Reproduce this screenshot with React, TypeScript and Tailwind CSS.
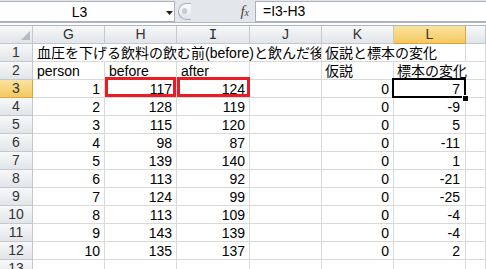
import React from "react";

const FONT = "font-['Liberation_Sans','Noto_Sans_CJK_JP',sans-serif]";

const persons = [1, 2, 3, 4, 5, 6, 7, 8, 9, 10];
const before = [117, 128, 115, 98, 139, 113, 124, 113, 143, 135];
const after = [124, 119, 120, 87, 140, 92, 99, 109, 139, 137];
const diff = [7, -9, 5, -11, 1, -21, -25, -4, -4, 2];

const cell =
  "h-[18px] shrink-0 border-r border-b border-[#d9d9d9] overflow-hidden whitespace-nowrap text-[14px] leading-[17px] pt-[1px] text-black";
const hdr =
  "h-[18px] shrink-0 border-r border-b border-[#c3c8ce] bg-linear-to-b from-[#f7f8f9] to-[#e2e5e9] text-center text-[14px] leading-[17px] text-[#333]";
const hdrSel =
  "h-[18px] shrink-0 border-r border-b border-[#e2a33c] bg-linear-to-b from-[#fbe3a0] to-[#f4c95c] text-center text-[14px] leading-[17px] text-[#333]";

function RowHeader({ n, sel }: { n: number; sel?: boolean }) {
  return <div className={`${sel ? hdrSel : hdr} w-[33px]`}>{n}</div>;
}

export default function App() {
  return (
    <div className={`w-[486px] h-[269px] overflow-hidden bg-white ${FONT}`}>
      {/* formula bar */}
      <div className="flex h-[22px] bg-[#e3e7ec]">
        <div className="w-[175px] h-[21px] mt-[1px] bg-white border-t border-b border-r border-[#a9b1ba] flex items-center">
          <div className="w-[160px] text-center text-[14px] leading-[18px] text-black">L3</div>
          <svg width="8" height="4" viewBox="0 0 8 4" className="ml-[7px] mt-[3px]">
            <polygon points="0,0 7,0 3.5,4" fill="#222" />
          </svg>
        </div>
        <div className="flex-1 flex items-center">
          <div className="ml-[3px] w-[13px] h-[17px] rounded-l-full border border-r-0 border-[#a9b1ba] bg-linear-to-b from-[#ffffff] to-[#dfe3e8] flex items-center justify-start pl-[3px]">
            <div className="w-[5px] h-[6px] rounded-full bg-[#c8cdd3]" />
          </div>
          <div className="ml-auto mr-[6px] font-['Liberation_Serif',serif] italic text-[15px] leading-none text-[#444]">
            f<span className="text-[10px]">x</span>
          </div>
        </div>
        <div className="w-[231px] h-[21px] mt-[1px] bg-white border-t border-b border-l border-[#a9b1ba] pl-[7px] text-[14px] leading-[19px] text-black">
          =I3-H3
        </div>
      </div>
      <div className="h-[4px] border-t border-b border-[#aeb5bd] bg-white" />

      {/* column headers */}
      <div className="flex">
        <div className={`${hdr} w-[33px] relative`}>
          <svg width="9" height="9" viewBox="0 0 9 9" className="absolute right-[2px] bottom-[3px]">
            <polygon points="9,0 9,9 0,9" fill="#b7bcc2" />
          </svg>
        </div>
        <div className={`${hdr} w-[72px]`}>G</div>
        <div className={`${hdr} w-[72px]`}>H</div>
        <div className={`${hdr} w-[73px] font-['DejaVu_Sans_Mono',monospace] text-[13px]`}>I</div>
        <div className={`${hdr} w-[72px]`}>J</div>
        <div className={`${hdr} w-[72px]`}>K</div>
        <div className={`${hdrSel} w-[72px]`}>L</div>
        <div className={`${hdr} flex-1`} />
      </div>

      {/* row 1 */}
      <div className="flex">
        <RowHeader n={1} />
        <div className={`${cell} w-[289px] pl-[4px] text-[14.67px]`}>血圧を下げる飲料の飲む前(before)と飲んだ後</div>
        <div className={`${cell} w-[144px] pl-[3px] text-[14.67px]`}>仮説と標本の変化</div>
        <div className={`${cell} flex-1`} />
      </div>

      {/* row 2 */}
      <div className="flex">
        <RowHeader n={2} />
        <div className={`${cell} w-[72px] pl-[4px]`}>person</div>
        <div className={`${cell} w-[72px] pl-[4px]`}>before</div>
        <div className={`${cell} w-[73px] pl-[4px]`}>after</div>
        <div className={`${cell} w-[72px]`} />
        <div className={`${cell} w-[72px] pl-[3px] text-[14.67px]`}>仮説</div>
        <div className={`${cell} flex-1 pl-[3px] text-[14.67px]`}>標本の変化</div>
      </div>

      {/* data rows */}
      {persons.map((p, i) => {
        const first = i === 0;
        return (
          <div className="flex" key={p}>
            <RowHeader n={i + 3} sel={first} />
            <div className={`${cell} w-[72px] text-right pr-[4px]`}>{p}</div>
            <div className={`${cell} w-[72px] text-right pr-[4px] ${first ? "relative overflow-visible" : ""}`}>
              {before[i]}
              {first && (
                <div className="absolute left-0 right-0 -top-[3px] bottom-0 border-[3px] border-[#ed1c24]" />
              )}
            </div>
            <div className={`${cell} w-[73px] text-right pr-[4px] ${first ? "relative overflow-visible" : ""}`}>
              {after[i]}
              {first && (
                <div className="absolute left-0 -right-[1px] -top-[3px] bottom-0 border-[3px] border-[#ed1c24]" />
              )}
            </div>
            <div className={`${cell} w-[72px]`} />
            <div className={`${cell} w-[72px] text-right pr-[4px]`}>0</div>
            <div className={`${cell} w-[72px] text-right pr-[5px] ${first ? "relative overflow-visible" : ""}`}>
              {diff[i]}
              {first && (
                <>
                  <div className="absolute -left-[2px] -right-[1px] -top-[2px] -bottom-[1px] border-2 border-black" />
                  <div className="absolute -right-[3px] -bottom-[4px] w-[5px] h-[5px] bg-black outline outline-1 outline-white" />
                </>
              )}
            </div>
            <div className={`${cell} flex-1`} />
          </div>
        );
      })}

      {/* row 13 */}
      <div className="flex">
        <RowHeader n={13} />
        <div className={`${cell} w-[72px]`} />
        <div className={`${cell} w-[72px]`} />
        <div className={`${cell} w-[73px]`} />
        <div className={`${cell} w-[72px]`} />
        <div className={`${cell} w-[72px]`} />
        <div className={`${cell} w-[72px]`} />
        <div className={`${cell} flex-1`} />
      </div>
    </div>
  );
}
